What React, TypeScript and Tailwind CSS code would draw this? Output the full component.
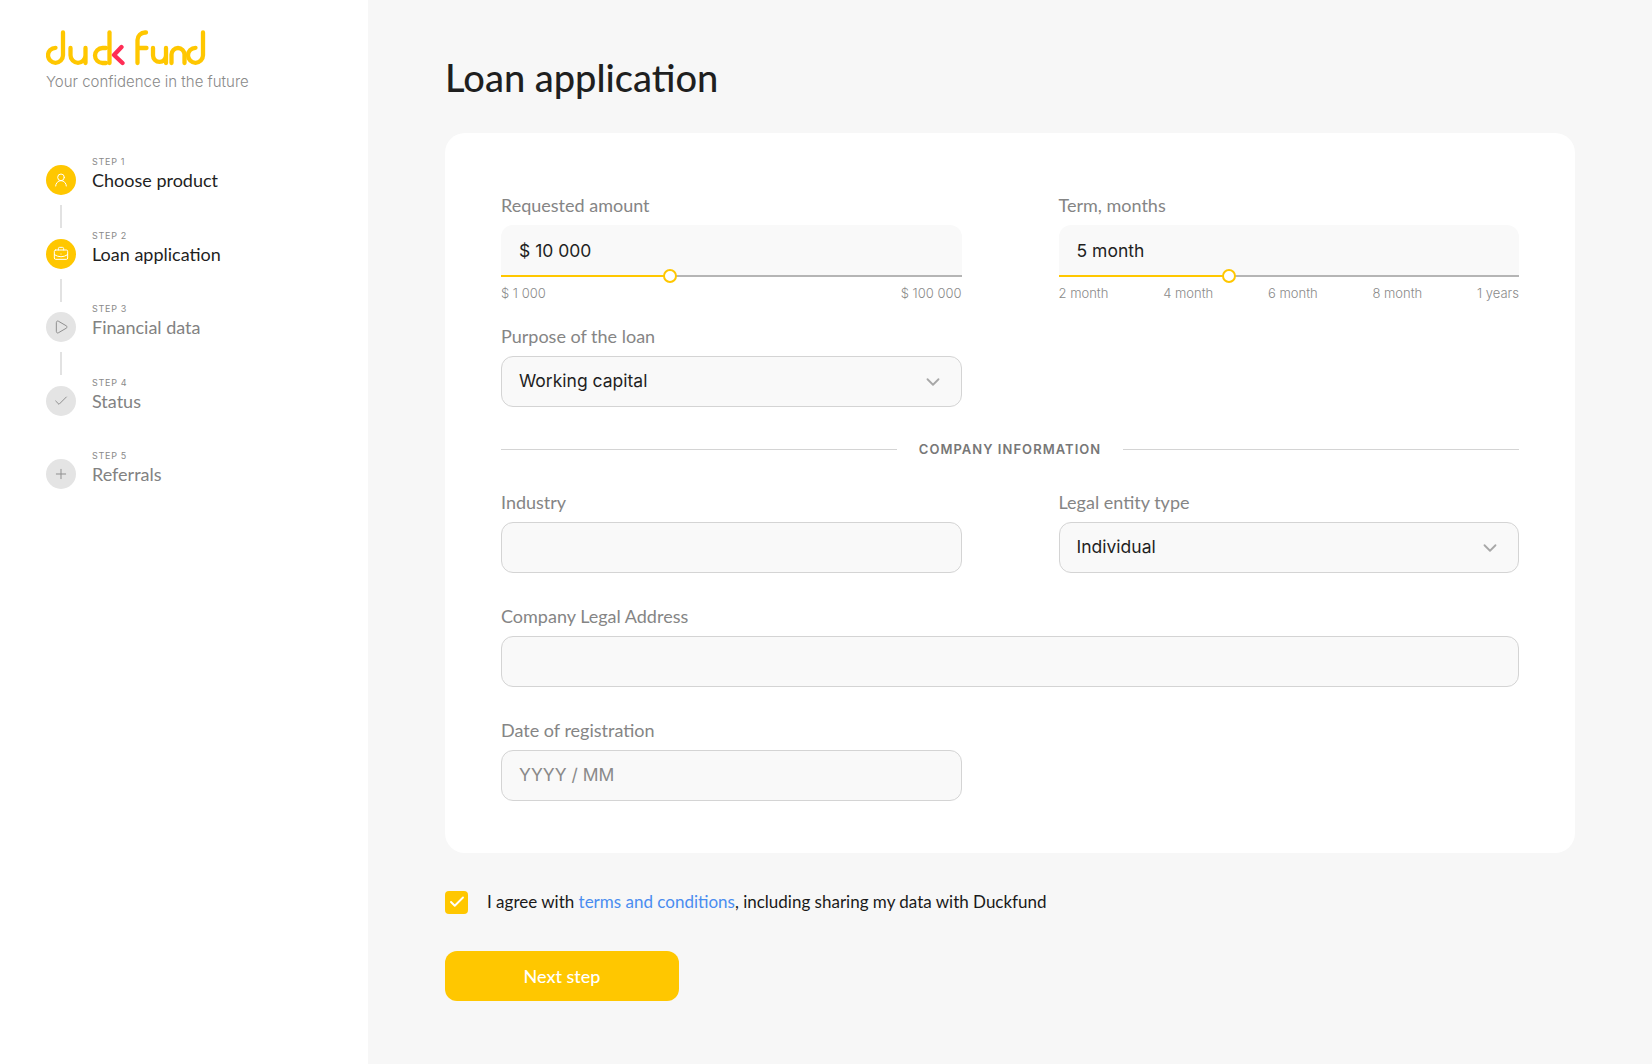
import React from "react";
import { BriefcaseBusiness, Check, ChevronDown, Plus, Play, UserRound } from "lucide-react";

const steps = [
  { label: "STEP 1", name: "Choose product", active: true, Icon: UserRound, line: true },
  { label: "STEP 2", name: "Loan application", active: true, Icon: BriefcaseBusiness, line: true },
  { label: "STEP 3", name: "Financial data", active: false, Icon: Play, line: true },
  { label: "STEP 4", name: "Status", active: false, Icon: Check, line: false },
  { label: "STEP 5", name: "Referrals", active: false, Icon: Plus, line: false },
];

const Logo = () => (
  <svg width="160" height="36" viewBox="0 0 160 36" fill="none" strokeWidth="4.3" strokeLinecap="round" strokeLinejoin="round" stroke="#ffc700">
    <path d="M17 2.5V25.3A7.5 7.5 0 1 1 9.5 17.8" />
    <path d="M24.5 18V25.3A7.5 7.5 0 0 0 39.5 25.3V18M39.5 25V33" />
    <path d="M60 18H56.5A7.5 7.5 0 0 0 56.5 33H60" />
    <path d="M63.5 2.5V33" />
    <path d="M75.5 17L68 25L76.5 33" stroke="#ff2d55" />
    <path d="M91.5 33V10A7.5 7.5 0 0 1 99 2.5H100M91.5 18H100.5" />
    <path d="M107 18V25.3A6.5 6.5 0 0 0 120 25.3V18M120 25V33" />
    <path d="M125.500 33V24.500A6.500 6.500 0 0 1 138.500 24.500V33" />
    <path d="M157 2.500V25.300A7.500 7.500 0 1 1 149.500 17.800" />
  </svg>
);

const Sidebar = () => (
  <aside className="w-[368px] shrink-0 bg-white pl-[46px] pt-[30px]">
    <Logo />
    <p className="mt-[5px] font-['Inter'] text-[15px] leading-[22px] font-light text-[#8a8a8a]">
      Your confidence in the future
    </p>
    <div className="mt-[72px] flex flex-col">
      {steps.map((s) => (
        <div key={s.label} className="flex h-[73.500px] gap-4">
          <div className="flex w-[30px] flex-col items-center">
            <div className={`flex size-[30px] items-center justify-center rounded-full ${s.active ? "bg-[#ffc700] text-white" : "bg-[#e4e4e4] text-[#8f8f8f]"}`}>
              <s.Icon className="size-4" strokeWidth={1.5} />
            </div>
            {s.line && <div className="mt-[10px] h-[23px] w-[2px] bg-[#e2e2e2]" />}
          </div>
          <div className="-mt-[9px]">
            <div className="font-['Inter'] text-[9px] leading-[12px] tracking-[0.08em] text-[#8a8a8a]">{s.label}</div>
            <div className={`font-['Lato'] text-[18px] leading-[24px] ${s.active ? "text-[#1f1f1f]" : "text-[#828282]"}`}>{s.name}</div>
          </div>
        </div>
      ))}
    </div>
  </aside>
);

const Label = ({ children }: { children: React.ReactNode }) => (
  <div className="mb-[8px] font-['Lato'] text-[18px] leading-[24px] text-[#858585]">{children}</div>
);

const Field = ({ label, value, muted, select }: { label: string; value?: string; muted?: boolean; select?: boolean }) => (
  <div>
    <Label>{label}</Label>
    <div className="flex h-[51px] items-center justify-between rounded-[12px] border border-[#d4d4d4] bg-[#f9f9f9] px-[17px] font-['Inter'] text-[17.500px]">
      <span className={muted ? "text-[#8a8a8a]" : "text-[#1f1f1f]"}>{value}</span>
      {select && <ChevronDown className="size-[22px] text-[#a8a8a8]" strokeWidth={2} />}
    </div>
  </div>
);

const Slider = ({ label, value, pos, ticks }: { label: string; value: string; pos: number; ticks: string[] }) => (
  <div>
    <Label>{label}</Label>
    <div className="relative h-[52px] rounded-t-[12px] bg-[#f9f9f9] px-[18px] pt-[12px] font-['Inter'] text-[17.500px] leading-[27px] text-[#1f1f1f]">
      {value}
      <div className="absolute inset-x-0 bottom-0 h-[2px] bg-[#b5b5b5]">
        <div className="h-full bg-[#ffc700]" style={{ width: pos }} />
        <div className="absolute top-[-6px] size-[14px] rounded-full border-[2px] border-[#ffc700] bg-white" style={{ left: pos - 7 }} />
      </div>
    </div>
    <div className="mt-[7px] flex justify-between font-['Inter'] text-[13px] leading-[18px] font-light text-[#8a8a8a]">
      {ticks.map((t) => (
        <span key={t}>{t}</span>
      ))}
    </div>
  </div>
);

export default function App() {
  return (
    <div className="flex h-[1064px] bg-[#f7f7f7]">
      <Sidebar />
      <main className="w-[1130px] pl-[77px] box-content">
        <h1 className="mt-[51px] font-['Lato'] text-[38px] leading-[52px] font-medium text-[#1f1f1f]">Loan application</h1>
        <div className="mt-[30px] flex h-[720px] flex-col rounded-[20px] bg-white px-[56px] pt-[60px]">
          <div className="grid grid-cols-2 gap-x-[97px]">
            <Slider label="Requested amount" value="$ 10 000" pos={169} ticks={["$ 1 000", "$ 100 000"]} />
            <Slider label="Term, months" value="5 month" pos={170} ticks={["2 month", "4 month", "6 month", "8 month", "1 years"]} />
          </div>
          <div className="mt-[22px] grid grid-cols-2 gap-x-[97px]">
            <Field label="Purpose of the loan" value="Working capital" select />
          </div>
          <div className="mt-[32px] flex items-center gap-[22px]">
            <div className="h-px flex-1 bg-[#d4d4d4]" />
            <span className="font-['Inter'] text-[13px] leading-[20px] font-semibold tracking-[0.08em] text-[#777]">COMPANY INFORMATION</span>
            <div className="h-px flex-1 bg-[#d4d4d4]" />
          </div>
          <div className="mt-[31px] grid grid-cols-2 gap-x-[97px]">
            <Field label="Industry" />
            <Field label="Legal entity type" value="Individual" select />
          </div>
          <div className="mt-[31px]">
            <Field label="Company Legal Address" />
          </div>
          <div className="mt-[31px] grid grid-cols-2 gap-x-[97px]">
            <Field label="Date of registration" value="YYYY / MM" muted />
          </div>
        </div>
        <div className="mt-[37px] flex items-center gap-[19px]">
          <div className="flex h-[23px] w-[23px] items-center justify-center rounded-[4px] bg-[#ffc700]">
            <Check className="size-[18px] text-white" strokeWidth={2.500} />
          </div>
          <p className="font-['Lato'] text-[17px] leading-[24px] text-[#1a1a1a]">
            I agree with <span className="text-[#4a8df0]">terms and conditions</span>, including sharing my data with Duckfund
          </p>
        </div>
        <button className="mt-[37px] h-[50px] w-[234px] rounded-[12px] bg-[#ffc700] font-['Lato'] text-[18px] font-medium text-white">
          Next step
        </button>
      </main>
    </div>
  );
}
